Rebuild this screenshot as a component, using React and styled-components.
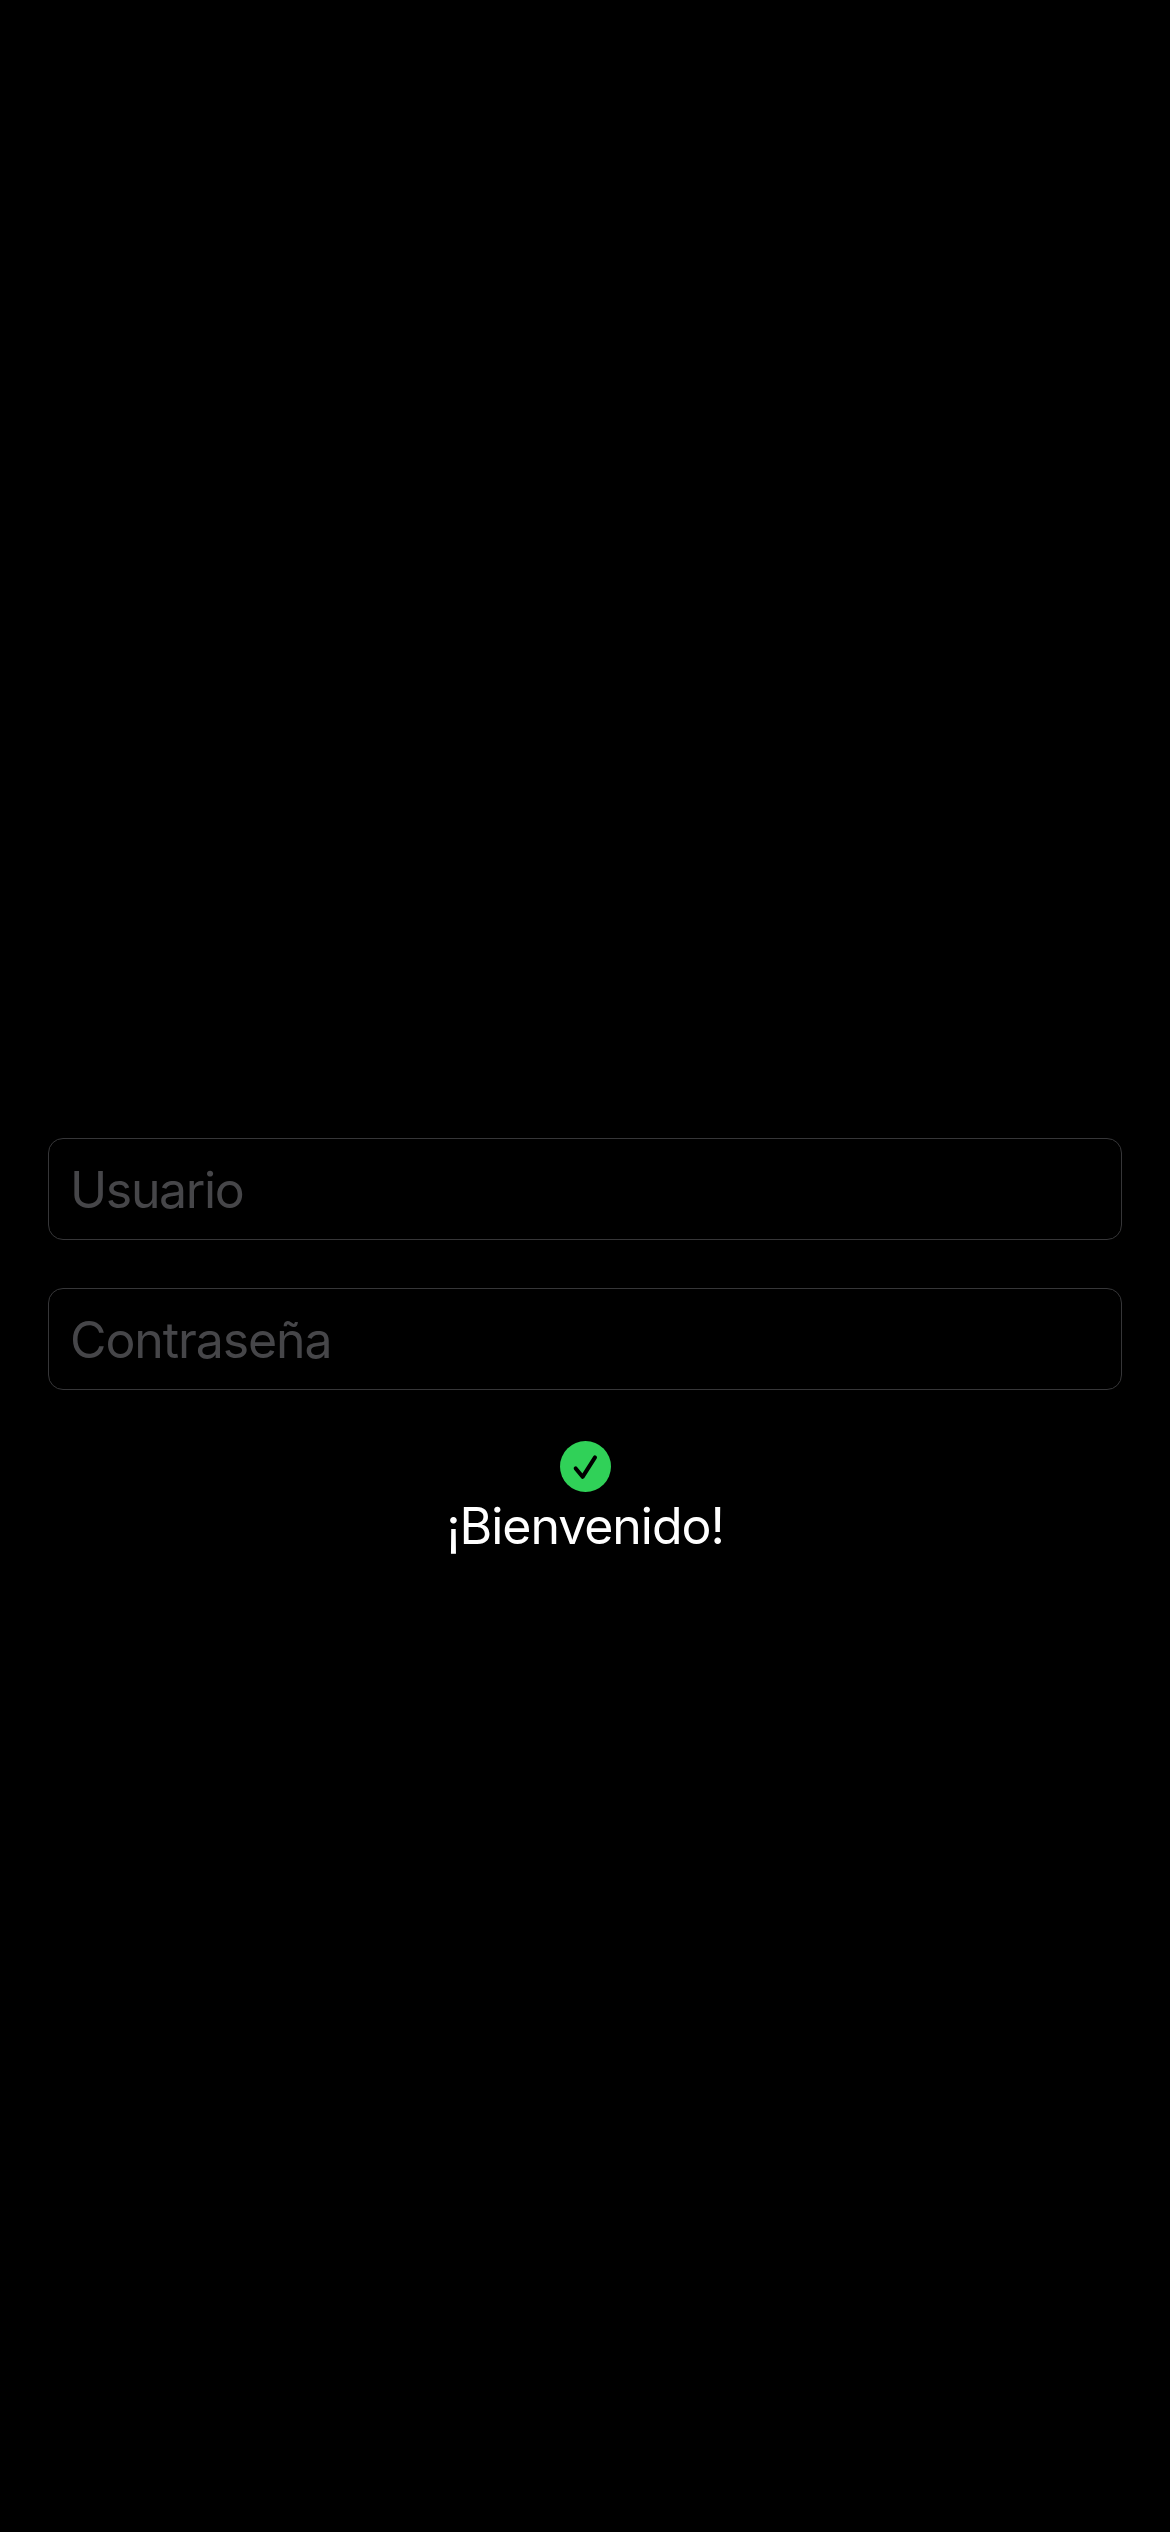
import React from "react";
import styled, { createGlobalStyle } from "styled-components";

const GlobalStyle = createGlobalStyle`
  body { margin: 0; background: #000; }
  * { box-sizing: border-box; }
`;

const Screen = styled.main`
  display: flex;
  flex-direction: column;
  align-items: center;
  min-height: 2532px;
  padding: 1138px 48px 0;
  background: #000;
  font-family: Inter, "Liberation Sans", sans-serif;
`;

const Form = styled.form`
  display: flex;
  flex-direction: column;
  gap: 48px;
  width: 100%;
`;

const Field = styled.input`
  width: 100%;
  height: 102px;
  padding: 2px 21px 0;
  border: 1px solid #363638;
  border-radius: 15px;
  outline: none;
  background: #000;
  color: #fff;
  font-family: inherit;
  font-size: 50px;
  letter-spacing: ${(p) => p.$tracking};
  &::placeholder { color: #464649; opacity: 1; }
`;

const Status = styled.section`
  display: flex;
  flex-direction: column;
  align-items: center;
  margin-top: 51px;
`;

const CheckBadge = styled.svg`
  display: block;
  width: 51px;
  height: 51px;
  margin-left: 1px;
`;

const Message = styled.p`
  margin: 4px 0 0;
  color: #fff;
  font-size: 50px;
  line-height: 60px;
  letter-spacing: -1.05px;
`;

export default function App() {
  return (
    <Screen>
      <GlobalStyle />
      <Form>
        <Field placeholder="Usuario" aria-label="Usuario" $tracking="-1.35px" />
        <Field type="password" placeholder="Contraseña" aria-label="Contraseña" $tracking="-1.1px" />
      </Form>
      <Status>
        <CheckBadge viewBox="0 0 51 51" aria-hidden="true">
          <circle cx="25.5" cy="25.5" r="25.5" fill="#30d158" />
          <path d="M15.7 27.4 L22.6 35.8 L35 16.4" fill="none" stroke="#000" strokeWidth="4" strokeLinecap="round" strokeLinejoin="round" />
        </CheckBadge>
        <Message>¡Bienvenido!</Message>
      </Status>
    </Screen>
  );
}
